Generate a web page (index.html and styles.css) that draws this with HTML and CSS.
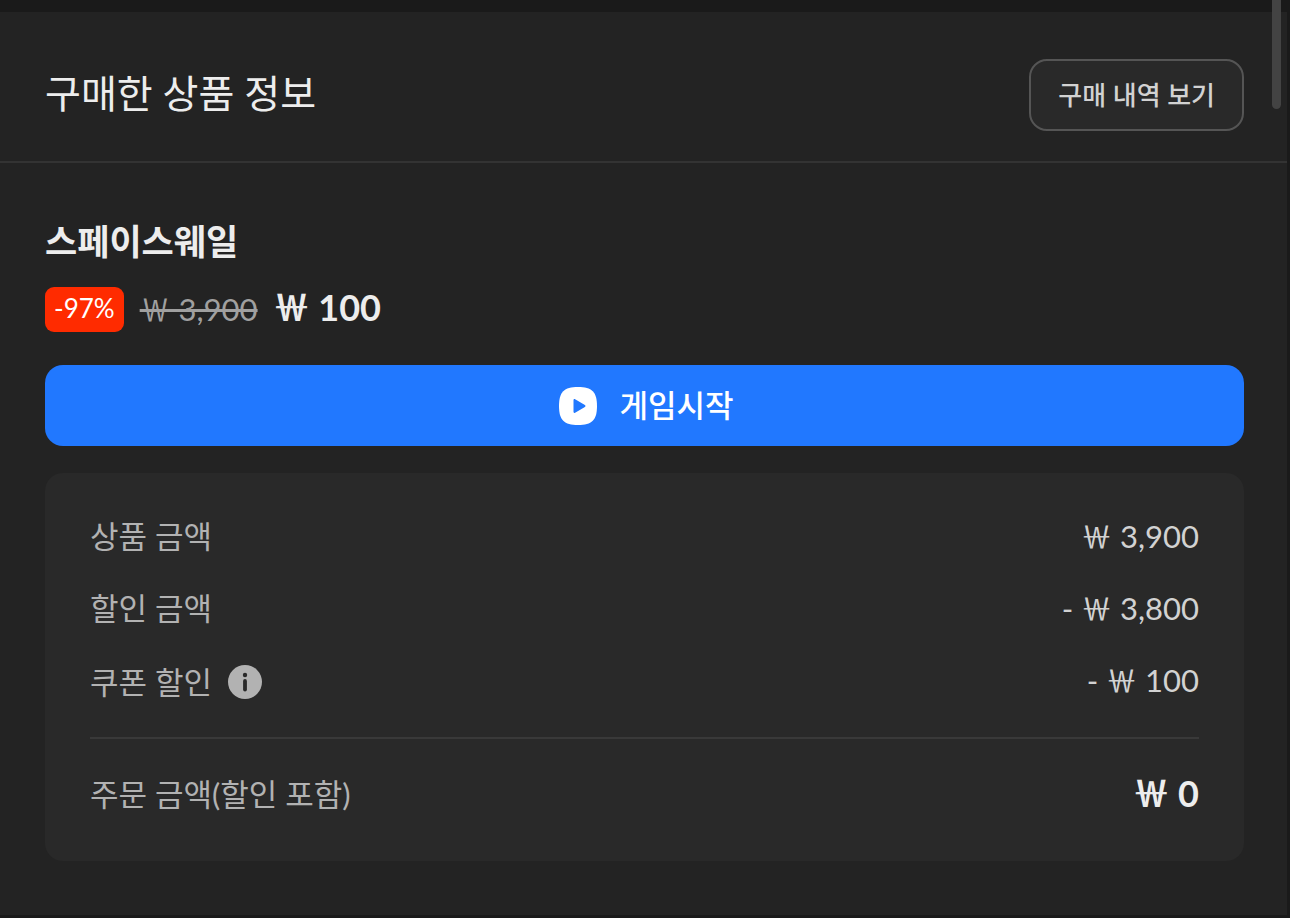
FILE: index.html
```html
<!DOCTYPE html>
<html lang="ko">
<head>
  <meta charset="UTF-8">
  <title>구매한 상품 정보</title>
  <meta name="viewport" content="width=device-width, initial-scale=1.0">
  <link rel="stylesheet" href="styles.css">
</head>
<body>
  <main class="panel">
    <header class="panel-header">
      <h1>구매한 상품 정보</h1>
      <button class="history-btn" type="button">구매 내역 보기</button>
    </header>

    <section class="product">
      <h2>스페이스웨일</h2>
      <div class="price-row">
        <span class="discount">-97%</span>
        <del class="old-price">￦ 3,900</del>
        <strong class="price">￦ 100</strong>
      </div>

      <button class="start-btn" type="button">
        <svg class="play-icon" viewBox="0 0 38 38" aria-hidden="true">
          <path fill="#fff" d="M19 0C33 0 38 5 38 19S33 38 19 38 0 33 0 19 5 0 19 0Z"/>
          <path fill="#2178ff" d="M14.5 13.2c0-1 .8-1.4 1.6-.9l9.8 5.8c.8.5.8 1.3 0 1.8l-9.8 5.8c-.8.5-1.6.1-1.6-.9Z"/>
        </svg>
        <span class="start-label">게임시작</span>
      </button>

      <!-- Payment summary -->
      <dl class="summary">
        <div class="summary-row">
          <dt>상품 금액</dt>
          <dd>￦ 3,900</dd>
        </div>
        <div class="summary-row">
          <dt>할인 금액</dt>
          <dd>- ￦ 3,800</dd>
        </div>
        <div class="summary-row coupon">
          <dt>
            쿠폰 할인
            <button class="info-btn" type="button" aria-label="쿠폰 할인 안내">
              <svg viewBox="0 0 34 34" aria-hidden="true">
                <circle cx="17" cy="17" r="17" fill="#b2b2b2"/>
                <circle cx="17" cy="10" r="2.2" fill="#292929"/>
                <path d="M17 16v8.5" stroke="#292929" stroke-width="3.8" stroke-linecap="round"/>
              </svg>
            </button>
          </dt>
          <dd>- ￦ 100</dd>
        </div>
        <div class="summary-row total">
          <dt>주문 금액(할인 포함)</dt>
          <dd>￦ 0</dd>
        </div>
      </dl>
    </section>
  </main>
  <div class="scroll-thumb"></div>
</body>
</html>
```
FILE: styles.css
```css
* {
  box-sizing: border-box;
}

body {
  margin: 0;
  padding: 12px 3px 3px 0;
  min-height: 100vh;
  display: flex;
  background: #1a1a1a;
  color: #ededed;
  font-family: Lato, 'Noto Sans CJK KR', sans-serif;
}

h1, h2, dl, dd {
  margin: 0;
}

button {
  font-family: inherit;
  cursor: pointer;
}

.panel {
  flex: 1;
  background: #232323;
}

.panel-header {
  display: flex;
  justify-content: space-between;
  align-items: center;
  padding: 47px 43px 30px 45px;
  border-bottom: 2px solid #333;
}

h1 {
  padding-bottom: 4px;
  font-size: 39px;
  font-weight: 400;
  line-height: 48px;
}

.history-btn {
  height: 72px;
  padding: 0 27px 4px;
  border: 2px solid #555;
  border-radius: 18px;
  background: #292929;
  color: #d2d2d2;
  font-size: 26px;
  font-weight: 500;
}

.product {
  padding: 54px 43px 54px 45px;
}

h2 {
  font-size: 35px;
  font-weight: 700;
  line-height: 48px;
}

.price-row {
  display: flex;
  align-items: center;
  gap: 16px;
  margin: 20px 0 32px;
  line-height: 48px;
}

.discount {
  height: 45px;
  padding: 0 9px;
  border-radius: 9px;
  background: #ff2b00;
  color: #fff;
  font-size: 26px;
  line-height: 42px;
}

.old-price {
  color: #a0a0a0;
  font-size: 31px;
}

.price {
  padding-bottom: 3px;
  font-size: 36px;
  font-weight: 700;
  line-height: 45px;
}

.start-btn {
  display: flex;
  align-items: center;
  justify-content: center;
  gap: 22px;
  width: 100%;
  height: 81px;
  padding: 0 0 0 4px;
  border: none;
  border-radius: 18px;
  background: #2178ff;
  color: #fff;
  font-size: 31px;
  font-weight: 500;
}

.start-label {
  padding-bottom: 4px;
}

.play-icon {
  width: 38px;
  height: 38px;
}

.summary {
  margin-top: 27px;
  padding: 36px 45px 40px;
  border-radius: 18px;
  background: #292929;
  color: #b2b2b2;
  font-size: 31px;
}

.summary-row {
  display: flex;
  justify-content: space-between;
  align-items: flex-start;
  line-height: 54px;
}

.summary-row + .summary-row {
  margin-top: 18px;
}

.summary-row dt {
  display: flex;
  align-items: center;
  gap: 16px;
}

.summary-row dd {
  color: #d2d2d2;
}

.coupon dt {
  line-height: 58px;
}

.info-btn {
  display: flex;
  width: 34px;
  height: 34px;
  padding: 0;
  border: none;
  background: none;
}

.summary-row.total {
  margin-top: 26px;
  padding-top: 28px;
  border-top: 2px solid #393939;
}

.total dd {
  color: #ededed;
  font-size: 36px;
  font-weight: 700;
  line-height: 52px;
}

.scroll-thumb {
  position: absolute;
  top: 0;
  right: 9px;
  width: 9px;
  height: 109px;
  border-radius: 0 0 5px 5px;
  background: #434343;
}
```
